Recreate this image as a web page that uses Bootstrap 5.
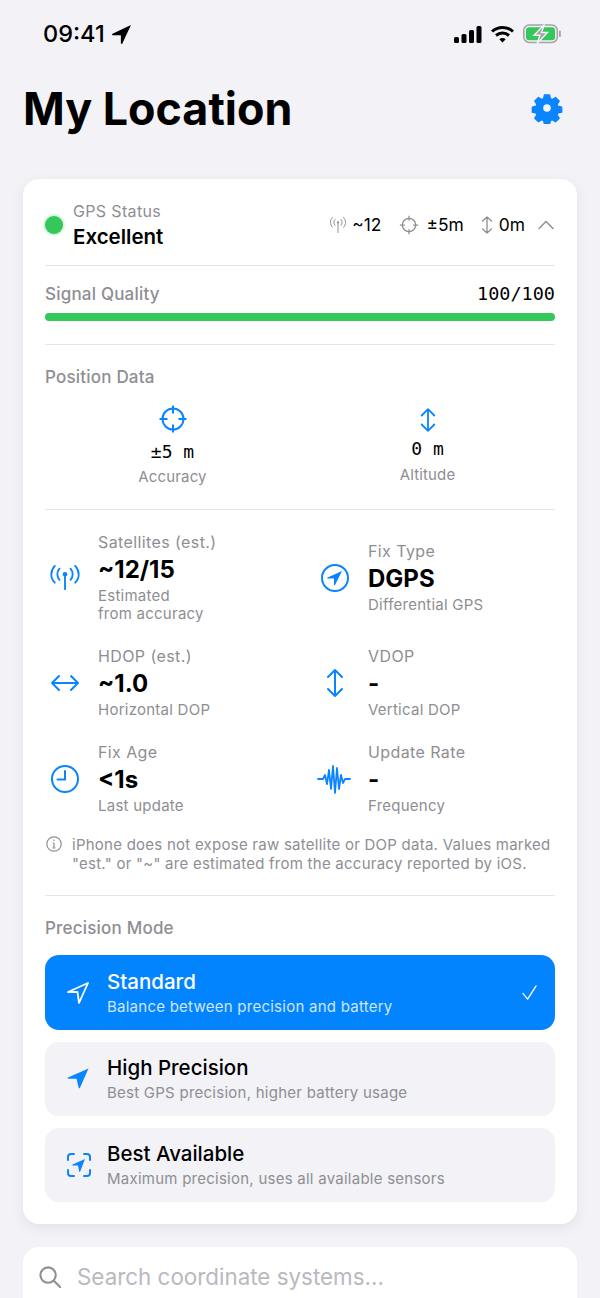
<!DOCTYPE html>
<html lang="en">

<head>
    <meta charset="UTF-8">
    <meta name="viewport" content="width=device-width, initial-scale=1.0">
    <title>My Location</title>
    <link href="https://cdn.jsdelivr.net/npm/bootstrap@5.3.3/dist/css/bootstrap.min.css" rel="stylesheet">
    <style>
        html, body { height: 1298px; overflow: hidden; }
        body { background: #f2f2f7; font-family: "Inter", "Noto Sans", sans-serif; color: #000; }
        .mono { font-family: "DejaVu Sans Mono", "Liberation Mono", monospace; }
        .status-row { height: 68px; padding: 20px 38px 0 43px; }
        .status-time { font-size: 23.5px; font-weight: 500; line-height: 28px; }
        .status-arrow { margin-left: 6px; }
        .status-icons { margin-top: 4px; gap: 8px; }
        .title-row { height: 111px; padding: 0 37px 30px 23px; }
        .title-text { font-size: 44.8px; font-weight: 700; line-height: 82px; margin: 0; }
        .gear-icon { margin-top: 24px; }
        .main-card { margin: 0 23px; border-radius: 16px; box-shadow: 0 4px 14px rgba(0, 0, 0, .07); padding: 0 22px; height: 1045px; }
        .gps-head { height: 87px; padding-top: 6px; border-bottom: 1px solid #e6e6ea; }
        .status-dot { width: 18px; height: 18px; border-radius: 50%; background: #34c759; box-shadow: 0 0 3px 1px rgba(52, 199, 89, .4); }
        .head-text { margin-left: 2px; }
        .dim-label { font-size: 16px; line-height: 20px; letter-spacing: .35px; color: #8e8e93; }
        .status-value { font-size: 20.5px; font-weight: 600; line-height: 26px; margin-top: 3px; }
        .quick-stat { font-size: 17.4px; line-height: 20px; }
        .stat-gap { margin-left: 18px; }
        .stat-gap-sm { margin-left: 17px; }
        .stat-pad { margin-left: 7px; }
        .stat-pad-sm { margin-left: 5px; }
        .stat-pad-md { margin-left: 6px; }
        .stat-end { margin-left: 12px; }
        .section-label { font-size: 17px; font-weight: 500; line-height: 20px; letter-spacing: .2px; color: #8e8e93; }
        .signal-block { height: 79px; padding-top: 18px; border-bottom: 1px solid #e6e6ea; }
        .signal-num { font-size: 18.5px; line-height: 20px; }
        .signal-track { height: 8px; border-radius: 4px; background: #34c759; margin-top: 9px; }
        .position-block { height: 165px; padding-top: 22px; border-bottom: 1px solid #e6e6ea; }
        .position-cols { margin-top: 17px; }
        .alt-icon { margin-top: 3px; }
        .position-val { font-size: 18px; line-height: 20px; margin-top: 8px; }
        .alt-val { margin-top: 6px; }
        .position-name { font-size: 15px; line-height: 20px; letter-spacing: .15px; color: #8e8e93; margin-top: 5px; }
        .alt-name { margin-top: 6px; }
        .metric-grid { display: grid; grid-template-columns: 1fr 1fr; column-gap: 30px; row-gap: 24px; padding-top: 23px; }
        .metric-icon { width: 40px; }
        .metric-text { margin-left: 13px; }
        .metric-label { font-size: 16px; line-height: 18px; letter-spacing: .4px; color: #8e8e93; }
        .metric-value { font-size: 24px; font-weight: 700; line-height: 33px; margin: 2px 0 1px; }
        .metric-sub { font-size: 15px; line-height: 18px; letter-spacing: .25px; color: #8e8e93; }
        .note-row { margin-top: 20px; height: 61px; border-bottom: 1px solid #e6e6ea; font-size: 15px; line-height: 19px; letter-spacing: .25px; color: #8e8e93; }
        .note-icon { margin-right: 9px; }
        .precision-head { padding-top: 22px; height: 59px; }
        .mode-btn { height: 74px; border-radius: 14px; background: #f2f2f7; padding: 0 17px 0 21px; margin-bottom: 12px; }
        .mode-on { background: #0384ff; color: #fff; height: 75px; }
        .mode-name { font-size: 20.5px; font-weight: 500; line-height: 26px; }
        .mode-desc { font-size: 15px; line-height: 20px; letter-spacing: .25px; color: #8e8e93; margin-top: 2px; }
        .mode-on .mode-desc { color: #cfe6ff; }
        .mode-icon { width: 41px; }
        .search-box { margin: 23px 23px 0; height: 70px; border-radius: 16px; padding: 0 17px 0 15px; }
        .search-icon { margin-top: 18px; margin-right: 15px; }
        .search-text { font-size: 22.4px; line-height: 60px; color: #b9b9be; }
    </style>
</head>

<body>
    <!-- status bar -->
    <div class="status-row d-flex justify-content-between align-items-start">
        <div class="d-flex align-items-center">
            <span class="status-time">09:41</span>
            <svg class="status-arrow" width="21" height="21" viewBox="0 0 20 20"><path d="M19 1 1.500 9.200c-.8.400-.6 1.400.3 1.400H9.400v7.600c0 .9 1 1.100 1.400.3z" fill="#000"/></svg>
        </div>
        <div class="status-icons d-flex align-items-center">
            <svg width="28" height="18" viewBox="0 0 28 18" fill="#000">
                <rect x="0" y="12" width="5" height="6" rx="1.500"/>
                <rect x="7.500" y="9" width="5" height="9" rx="1.500"/>
                <rect x="15" y="5" width="5" height="13" rx="1.500"/>
                <rect x="22.500" y="1" width="5" height="17" rx="1.500"/>
            </svg>
            <svg width="25" height="18" viewBox="0 0 24 18" fill="none" stroke="#000" stroke-width="3">
                <path d="M1.500 6.500c6-5.500 15-5.500 21 0"/>
                <path d="M5.500 10.500c3.700-3.200 9.300-3.200 13 0"/>
                <path d="M12 17.500 8.800 14.200c1.800-1.500 4.600-1.500 6.400 0z" fill="#000" stroke="none"/>
            </svg>
            <svg width="39" height="20" viewBox="0 0 39 20">
                <rect x=".8" y="1" width="33.500" height="17.500" rx="5.500" fill="none" stroke="#a3a3a6" stroke-width="1.500"/>
                <rect x="3" y="3.200" width="29" height="13" rx="3" fill="#34c759"/>
                <rect x="36" y="6.500" width="1.800" height="6.500" rx=".8" fill="#a3a3a6"/>
                <path d="M21.500 .5 11 11.200h6l-3 8.300 10.500-11h-6z" fill="#a3a3a6" stroke="#f2f2f7" stroke-width="1.400"/>
            </svg>
        </div>
    </div>

    <!-- title -->
    <div class="title-row d-flex justify-content-between align-items-start">
        <h1 class="title-text">My Location</h1>
        <svg class="gear-icon" width="32" height="32" viewBox="0 0 32 32">
            <path fill="#0a84ff" stroke="#0a84ff" stroke-width="1.500" stroke-linejoin="round" fill-rule="evenodd" d="M13.200 1.500h5.600l1 4.200 2 .9 3.700-2.300 4 4-2.300 3.700.9 2 4.200 1v5.600l-4.200 1-.9 2 2.300 3.700-4 4-3.700-2.300-2 .9-1 4.200h-5.600l-1-4.200-2-.9-3.700 2.300-4-4 2.300-3.700-.9-2-4.200-1v-5.600l4.200-1 .9-2-2.300-3.700 4-4 3.700 2.300 2-.9zM16 11a5 5 0 1 0 0 10 5 5 0 0 0 0-10z" transform="translate(1.600 1.600) scale(.9)"/>
        </svg>
    </div>

    <div class="card border-0 main-card">
        <!-- gps header -->
        <div class="gps-head d-flex align-items-center">
            <span class="status-dot me-2"></span>
            <div class="flex-grow-1 head-text">
                <div class="dim-label">GPS Status</div>
                <div class="status-value">Excellent</div>
            </div>
            <div class="d-flex align-items-center quick-stat">
                <svg width="18" height="18" viewBox="0 0 24 24" fill="none" stroke="#8e8e93" stroke-width="1.300" stroke-linecap="round">
                    <path d="M12 10v12"/><circle cx="12" cy="8.500" r="1.500" fill="#8e8e93" stroke="none"/>
                    <path d="M8 4.500c-2 2.200-2 5.800 0 8M16 4.500c2 2.200 2 5.800 0 8M4.500 2c-3.500 4-3.500 9 0 13M19.500 2c3.500 4 3.500 9 0 13"/>
                </svg>
                <span class="stat-pad-sm">~12</span>
                <svg class="stat-gap" width="20" height="20" viewBox="0 0 24 24" fill="none" stroke="#8e8e93" stroke-width="1.500">
                    <circle cx="12" cy="12" r="8"/><path d="M12 1v6M12 17v6M1 12h6M17 12h6"/>
                </svg>
                <span class="stat-pad">±5m</span>
                <svg class="stat-gap-sm" width="12" height="18" viewBox="0 0 12 18" fill="none" stroke="#8e8e93" stroke-width="1.300" stroke-linecap="round" stroke-linejoin="round">
                    <path d="M6 1v16M1.500 5 6 1l4.500 4M1.500 13 6 17l4.500-4"/>
                </svg>
                <span class="stat-pad-md">0m</span>
                <svg class="stat-end" width="18" height="12" viewBox="0 0 18 12" fill="none" stroke="#8e8e93" stroke-width="1.500" stroke-linecap="round" stroke-linejoin="round">
                    <path d="M2 9.500 9 2.500l7 7"/>
                </svg>
            </div>
        </div>

        <!-- signal -->
        <div class="signal-block">
            <div class="d-flex justify-content-between align-items-center">
                <span class="section-label">Signal Quality</span>
                <span class="signal-num mono">100/100</span>
            </div>
            <div class="signal-track"></div>
        </div>

        <!-- position -->
        <div class="position-block">
            <div class="section-label">Position Data</div>
            <div class="row g-0 text-center position-cols">
                <div class="col-6">
                    <svg class="d-block mx-auto" width="30" height="30" viewBox="0 0 30 30" fill="none" stroke="#0a84ff" stroke-width="2">
                        <circle cx="15" cy="15" r="10.500"/><path d="M15 1.500v8M15 20.500v8M1.500 15h8M20.500 15h8"/>
                    </svg>
                    <div class="position-val mono">±5 m</div>
                    <div class="position-name">Accuracy</div>
                </div>
                <div class="col-6">
                    <svg class="d-block mx-auto alt-icon" width="18" height="26" viewBox="0 0 20 28" fill="none" stroke="#0a84ff" stroke-width="2" stroke-linecap="round" stroke-linejoin="round">
                        <path d="M10 2v24M3 9l7-7 7 7M3 19l7 7 7-7"/>
                    </svg>
                    <div class="position-val alt-val mono">0 m</div>
                    <div class="position-name alt-name">Altitude</div>
                </div>
            </div>
        </div>

        <!-- metrics -->
        <div class="metric-grid">
            <div class="d-flex align-items-center">
                <div class="metric-icon">
                    <svg class="d-block mx-auto" width="30" height="26" viewBox="0 0 32 28" fill="none" stroke="#0a84ff" stroke-width="2" stroke-linecap="round">
                        <circle cx="16" cy="10" r="2.500" fill="#0a84ff" stroke="none"/><path d="M16 11v15"/>
                        <path d="M10 4c-3 3.500-3 8.500 0 12M22 4c3 3.500 3 8.500 0 12M5 1c-5 5.500-5 13 0 18M27 1c5 5.500 5 13 0 18"/>
                    </svg>
                </div>
                <div class="metric-text">
                    <div class="metric-label">Satellites (est.)</div>
                    <div class="metric-value">~12/15</div>
                    <div class="metric-sub">Estimated<br>from accuracy</div>
                </div>
            </div>
            <div class="d-flex align-items-center">
                <div class="metric-icon">
                    <svg class="d-block mx-auto" width="30" height="30" viewBox="0 0 30 30">
                        <circle cx="15" cy="15" r="13" fill="none" stroke="#0a84ff" stroke-width="2"/>
                        <path d="M22 8 7.500 14.500c-.5.300-.4 1 .2 1H14v6.300c0 .6.700.7 1 .2z" fill="#0a84ff"/>
                    </svg>
                </div>
                <div class="metric-text">
                    <div class="metric-label">Fix Type</div>
                    <div class="metric-value">DGPS</div>
                    <div class="metric-sub">Differential GPS</div>
                </div>
            </div>
            <div class="d-flex align-items-center">
                <div class="metric-icon">
                    <svg class="d-block mx-auto" width="30" height="20" viewBox="0 0 30 20" fill="none" stroke="#0a84ff" stroke-width="2" stroke-linecap="round" stroke-linejoin="round">
                        <path d="M2 10h26M9 3l-7 7 7 7M21 3l7 7-7 7"/>
                    </svg>
                </div>
                <div class="metric-text">
                    <div class="metric-label">HDOP (est.)</div>
                    <div class="metric-value">~1.0</div>
                    <div class="metric-sub">Horizontal DOP</div>
                </div>
            </div>
            <div class="d-flex align-items-center">
                <div class="metric-icon">
                    <svg class="d-block mx-auto" width="20" height="30" viewBox="0 0 20 30" fill="none" stroke="#0a84ff" stroke-width="2" stroke-linecap="round" stroke-linejoin="round">
                        <path d="M10 2v26M3 9l7-7 7 7M3 21l7 7 7-7"/>
                    </svg>
                </div>
                <div class="metric-text">
                    <div class="metric-label">VDOP</div>
                    <div class="metric-value">-</div>
                    <div class="metric-sub">Vertical DOP</div>
                </div>
            </div>
            <div class="d-flex align-items-center">
                <div class="metric-icon">
                    <svg class="d-block mx-auto" width="30" height="30" viewBox="0 0 30 30" fill="none" stroke="#0a84ff" stroke-width="2" stroke-linecap="round">
                        <circle cx="15" cy="15" r="13"/><path d="M15 7v8.500H7.500"/>
                    </svg>
                </div>
                <div class="metric-text">
                    <div class="metric-label">Fix Age</div>
                    <div class="metric-value">&lt;1s</div>
                    <div class="metric-sub">Last update</div>
                </div>
            </div>
            <div class="d-flex align-items-center">
                <div class="metric-icon">
                    <svg class="d-block mx-auto" width="36" height="32" viewBox="0 0 36 32" fill="none" stroke="#0a84ff" stroke-width="1.800" stroke-linecap="round" stroke-linejoin="round">
                        <path d="M1 16h5l2-4 2 9 2-14 2 19 2-23 2 27 2-25 2 21 2-14 2 8 2-4h5"/>
                    </svg>
                </div>
                <div class="metric-text">
                    <div class="metric-label">Update Rate</div>
                    <div class="metric-value">-</div>
                    <div class="metric-sub">Frequency</div>
                </div>
            </div>
        </div>

        <!-- note -->
        <div class="note-row d-flex">
            <svg class="flex-shrink-0 note-icon" width="18" height="18" viewBox="0 0 18 18" fill="none" stroke="#8e8e93" stroke-width="1.200">
                <circle cx="9" cy="9" r="7.200"/><path d="M9 8v5M7.500 13h3M7.800 8H9"/><circle cx="9" cy="5.300" r=".8" fill="#8e8e93" stroke="none"/>
            </svg>
            <div>iPhone does not expose raw satellite or DOP data. Values marked "est." or "~" are estimated from the accuracy reported by iOS.</div>
        </div>

        <!-- precision -->
        <div class="precision-head section-label">Precision Mode</div>
        <div class="mode-btn mode-on d-flex align-items-center">
            <div class="mode-icon">
                <svg class="d-block" width="24" height="24" viewBox="0 0 24 24" fill="none" stroke="#fff" stroke-width="1.800" stroke-linejoin="round"><path d="M22 2 2 11h9.500l1.500 11z"/></svg>
            </div>
            <div class="flex-grow-1">
                <div class="mode-name">Standard</div>
                <div class="mode-desc">Balance between precision and battery</div>
            </div>
            <svg width="17" height="17" viewBox="0 0 18 18" fill="none" stroke="#fff" stroke-width="1.400" stroke-linecap="round" stroke-linejoin="round"><path d="M2 10l5 6L16 2"/></svg>
        </div>
        <div class="mode-btn d-flex align-items-center">
            <div class="mode-icon">
                <svg class="d-block" width="24" height="24" viewBox="0 0 24 24"><path d="M22.500 1.500 2 10.500c-.7.400-.5 1.200.3 1.200h8.200l2.200 9c.2.800 1 .8 1.300 0z" fill="#0a84ff"/></svg>
            </div>
            <div class="flex-grow-1">
                <div class="mode-name">High Precision</div>
                <div class="mode-desc">Best GPS precision, higher battery usage</div>
            </div>
        </div>
        <div class="mode-btn d-flex align-items-center">
            <div class="mode-icon">
                <svg class="d-block" width="26" height="26" viewBox="0 0 26 26" fill="none" stroke="#0a84ff" stroke-width="2" stroke-linecap="round">
                    <path d="M2 8V5a3 3 0 0 1 3-3h3M18 2h3a3 3 0 0 1 3 3v3M24 18v3a3 3 0 0 1-3 3h-3M8 24H5a3 3 0 0 1-3-3v-3"/>
                    <path d="M19 7 6.500 12.500c-.5.300-.4.900.2.900H12l1.200 6c.2.600.8.600 1 0z" fill="#0a84ff" stroke="none"/>
                </svg>
            </div>
            <div class="flex-grow-1">
                <div class="mode-name">Best Available</div>
                <div class="mode-desc">Maximum precision, uses all available sensors</div>
            </div>
        </div>
    </div>

    <!-- search -->
    <div class="card border-0 search-box d-flex flex-row align-items-start">
        <svg class="flex-shrink-0 search-icon" width="24" height="24" viewBox="0 0 25 25" fill="none" stroke="#8e8e93" stroke-width="2.200" stroke-linecap="round">
            <circle cx="10.500" cy="10.500" r="8"/><path d="M16.500 16.500 23 23"/>
        </svg>
        <span class="search-text">Search coordinate systems...</span>
    </div>

    <script src="https://cdn.jsdelivr.net/npm/bootstrap@5.3.3/dist/js/bootstrap.bundle.min.js"></script>
</body>

</html>
